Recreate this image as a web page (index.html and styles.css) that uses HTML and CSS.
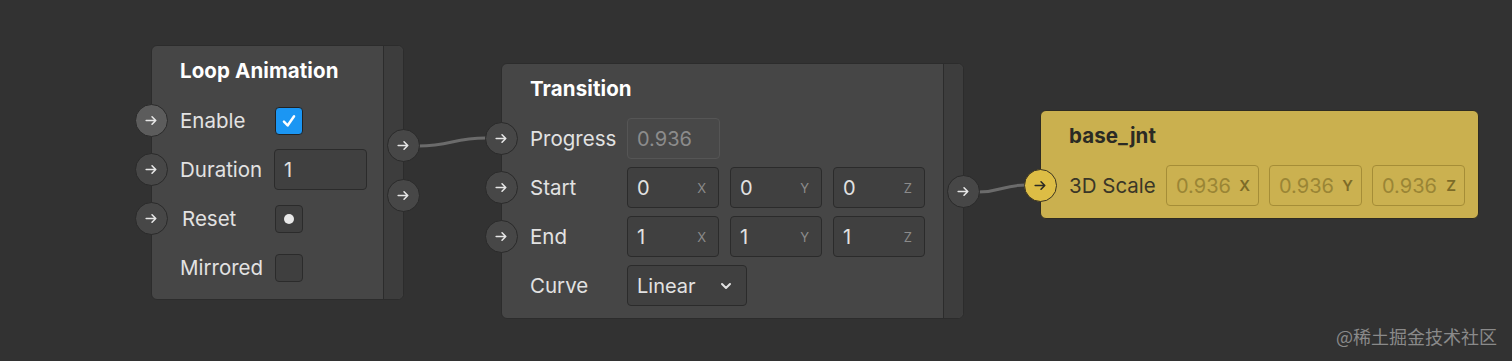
FILE: index.html
```html
<!DOCTYPE html>
<html lang="en">
<head>
    <meta charset="UTF-8">
    <title>Node Graph</title>
    <link rel="stylesheet" href="styles.css">
</head>
<body>
    <div class="canvas">
        <svg class="wires" width="1512" height="361">
            <path d="M418 146 C 452 146, 452 138, 486 138" />
            <path d="M978 192 C 1002 192, 1002 185, 1026 185" />
        </svg>

        <!-- Loop Animation -->
        <div class="node node-loop">
            <div class="node-body">
                <div class="node-title">Loop Animation</div>
                <div class="row">
                    <span class="port port-hover"><svg viewBox="0 0 16 16"><path d="M3 8h9M8.5 4.5 12 8l-3.5 3.5"/></svg></span>
                    <span class="label">Enable</span>
                    <span class="check check-on"><svg viewBox="0 0 16 16"><path d="M3.5 8.5 6.8 12 12.5 3.8"/></svg></span>
                </div>
                <div class="row">
                    <span class="port"><svg viewBox="0 0 16 16"><path d="M3 8h9M8.5 4.5 12 8l-3.5 3.5"/></svg></span>
                    <span class="label">Duration</span>
                    <span class="field">1</span>
                </div>
                <div class="row">
                    <span class="port"><svg viewBox="0 0 16 16"><path d="M3 8h9M8.5 4.5 12 8l-3.5 3.5"/></svg></span>
                    <span class="label label-reset">Reset</span>
                    <span class="check"><span class="dot"></span></span>
                </div>
                <div class="row">
                    <span class="label">Mirrored</span>
                    <span class="check"></span>
                </div>
            </div>
            <div class="node-strip">
                <span class="port out out-1"><svg viewBox="0 0 16 16"><path d="M3 8h9M8.5 4.5 12 8l-3.5 3.5"/></svg></span>
                <span class="port out out-2"><svg viewBox="0 0 16 16"><path d="M3 8h9M8.5 4.5 12 8l-3.5 3.5"/></svg></span>
            </div>
        </div>

        <!-- Transition -->
        <div class="node node-transition">
            <div class="node-body">
                <div class="node-title">Transition</div>
                <div class="row">
                    <span class="port"><svg viewBox="0 0 16 16"><path d="M3 8h9M8.5 4.5 12 8l-3.5 3.5"/></svg></span>
                    <span class="label">Progress</span>
                    <span class="field field-disabled">0.936</span>
                </div>
                <div class="row">
                    <span class="port"><svg viewBox="0 0 16 16"><path d="M3 8h9M8.5 4.5 12 8l-3.5 3.5"/></svg></span>
                    <span class="label">Start</span>
                    <div class="vec">
                        <span class="field">0<i>X</i></span>
                        <span class="field">0<i>Y</i></span>
                        <span class="field">0<i>Z</i></span>
                    </div>
                </div>
                <div class="row">
                    <span class="port"><svg viewBox="0 0 16 16"><path d="M3 8h9M8.5 4.5 12 8l-3.5 3.5"/></svg></span>
                    <span class="label">End</span>
                    <div class="vec">
                        <span class="field">1<i>X</i></span>
                        <span class="field">1<i>Y</i></span>
                        <span class="field">1<i>Z</i></span>
                    </div>
                </div>
                <div class="row">
                    <span class="label">Curve</span>
                    <span class="field select">Linear<svg viewBox="0 0 16 16"><path d="M4 6l4 4 4-4"/></svg></span>
                </div>
            </div>
            <div class="node-strip">
                <span class="port out out-3"><svg viewBox="0 0 16 16"><path d="M3 8h9M8.5 4.5 12 8l-3.5 3.5"/></svg></span>
            </div>
        </div>

        <!-- base_jnt -->
        <div class="node node-joint">
            <div class="node-body">
                <div class="node-title">base_jnt</div>
                <div class="row">
                    <span class="port"><svg viewBox="0 0 16 16"><path d="M3 8h9M8.5 4.5 12 8l-3.5 3.5"/></svg></span>
                    <span class="label">3D Scale</span>
                    <div class="vec">
                        <span class="field">0.936<i>X</i></span>
                        <span class="field">0.936<i>Y</i></span>
                        <span class="field">0.936<i>Z</i></span>
                    </div>
                </div>
            </div>
        </div>

        <div class="watermark">@稀土掘金技术社区</div>
    </div>
</body>
</html>
```

FILE: styles.css
```css
body {
    margin: 0;
    background-color: #323232;
    font-family: Inter, "Noto Sans", sans-serif;
    color: #e2e2e2;
    overflow: hidden;
}
.canvas {
    position: relative;
    width: 1512px;
    height: 361px;
}
.wires {
    position: absolute;
    left: 0;
    top: 0;
}
.wires path {
    fill: none;
    stroke: #6b6b6b;
    stroke-width: 3;
}
.node {
    position: absolute;
    display: flex;
    box-sizing: border-box;
    background-color: #464646;
    border: 1px solid #2c2c2c;
    border-radius: 6px;
}
.node-loop {
    left: 151px;
    top: 45px;
    width: 253px;
    height: 255px;
    --label: 94px;
}
.node-transition {
    left: 501px;
    top: 63px;
    width: 463px;
    height: 256px;
    --label: 97px;
}
.node-joint {
    left: 1040px;
    top: 110px;
    width: 439px;
    height: 109px;
    --label: 97px;
    background-color: #cab04f;
    border-color: #2e2b22;
    color: #3a3627;
}
.node-body {
    flex: 1;
}
.node-strip {
    position: relative;
    width: 19px;
    background-color: #3d3d3d;
    border-left: 1px solid #2c2c2c;
    border-radius: 0 6px 6px 0;
}
.node-title {
    height: 50px;
    padding-left: 28px;
    line-height: 50px;
    font-size: 20.5px;
    font-weight: 700;
    letter-spacing: 0.1px;
    color: #fff;
}
.node-joint .node-title {
    color: #2b2a24;
}
.row {
    position: relative;
    display: grid;
    grid-template-columns: var(--label) auto;
    align-items: center;
    height: 49px;
    padding-left: 28px;
}
.label {
    font-size: 20.5px;
}
.label-reset {
    padding-left: 2px;
}
.port {
    position: absolute;
    left: -17px;
    top: 8px;
    display: flex;
    align-items: center;
    justify-content: center;
    width: 31px;
    height: 31px;
    border-radius: 50%;
    background-color: #474747;
    border: 1.5px solid #2a2a2a;
}
.port svg {
    width: 17px;
    height: 17px;
    fill: none;
    stroke: #e6e6e6;
    stroke-width: 1.5;
    stroke-linecap: round;
    stroke-linejoin: round;
}
.port-hover {
    background-color: #5c5c5c;
}
.out {
    left: auto;
    right: -17px;
}
.out-1 { top: 83px; }
.out-2 { top: 133px; }
.out-3 { top: 111px; }
.node-joint .port {
    background-color: #ddbd45;
    border-color: #3b3420;
}
.node-joint .port svg {
    stroke: #2b2a24;
}
.check {
    display: flex;
    align-items: center;
    justify-content: center;
    box-sizing: border-box;
    width: 28px;
    height: 28px;
    margin-left: 1px;
    border: 1.5px solid #2b2b2b;
    border-radius: 4px;
    background-color: #3f3f3f;
}
.check-on {
    background-color: #1b96f3;
    border-color: #222;
}
.check svg {
    width: 18px;
    height: 18px;
    fill: none;
    stroke: #fff;
    stroke-width: 2.2;
    stroke-linecap: round;
    stroke-linejoin: round;
}
.dot {
    width: 10px;
    height: 10px;
    border-radius: 50%;
    background-color: #e8e8e8;
}
.field {
    display: flex;
    align-items: center;
    justify-content: space-between;
    box-sizing: border-box;
    width: 93px;
    height: 41px;
    padding: 0 12px 0 9px;
    border: 1.5px solid #2b2b2b;
    border-radius: 4px;
    background-color: #404040;
    font-size: 20px;
    color: #e2e2e2;
}
.field i {
    font-style: normal;
    font-size: 13px;
    color: #8b8b8b;
}
.field-disabled {
    background-color: #484848;
    border-color: #555;
    color: #8c8c8c;
}
.select {
    width: 120px;
    padding-right: 12px;
}
.select svg {
    width: 16px;
    height: 16px;
    fill: none;
    stroke: #e2e2e2;
    stroke-width: 2;
    stroke-linecap: round;
    stroke-linejoin: round;
}
.vec {
    display: flex;
    gap: 11px;
}
.vec .field {
    width: 92px;
}
.node-joint .vec {
    gap: 10px;
}
.node-joint .field {
    width: 93px;
    padding: 0 8px 0 9px;
    background-color: #cbb150;
    border-color: #a58d37;
    color: #9a8535;
}
.node-joint .field i {
    font-size: 15px;
    font-weight: 600;
    color: #7d6b27;
}
.watermark {
    position: absolute;
    left: 1336px;
    top: 323px;
    font-family: "Noto Sans CJK SC", sans-serif;
    font-size: 18px;
    color: #8a8a8a;
}
```
